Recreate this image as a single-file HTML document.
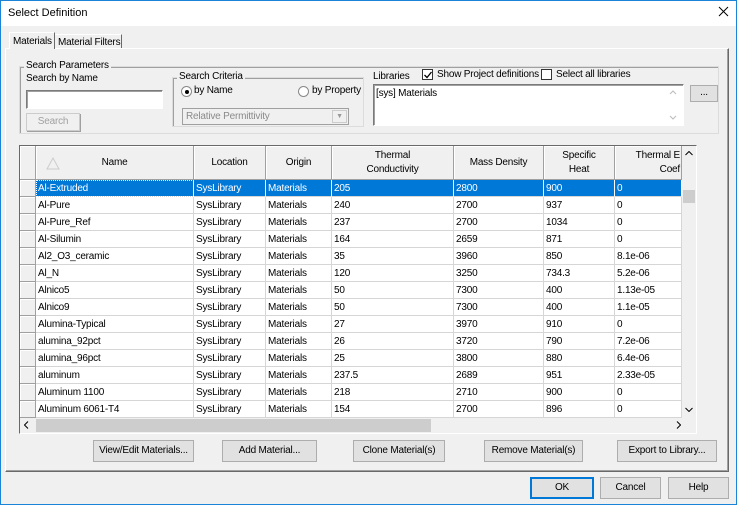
<!DOCTYPE html>
<html><head><style>
*{box-sizing:border-box;margin:0;padding:0}
body{width:737px;height:505px;overflow:hidden;background:#f0f0f0;font-family:"Liberation Sans",sans-serif;font-size:10px;letter-spacing:-0.2px;color:#000;position:relative}
.a{position:absolute;white-space:nowrap}
.win{left:0;top:0;width:737px;height:505px;border:1px solid #1c84d8}
.title{left:1px;top:1px;width:735px;height:25px;background:#fff}
.btn{position:absolute;white-space:nowrap;background:#e1e1e1;border:1px solid #adadad;text-align:center;line-height:20px}
.grp{position:absolute;border:1px solid #dcdcdc;box-shadow:inset 1px 1px 0 #a0a0a0}
.lbl{position:absolute;background:#f0f0f0;padding:0 2px;white-space:nowrap}
.sunk{position:absolute;background:#fff;border:1px solid #7a7a7a;border-right-color:#fff;border-bottom-color:#fff;box-shadow:inset 1px 1px 0 #a0a0a0}
.cell{position:absolute;height:17px;line-height:16px;padding:1px 0 0 2px;white-space:nowrap;overflow:hidden;border-right:1px solid #d6d6d6;border-bottom:1px solid #d6d6d6}
.rh{position:absolute;left:20px;width:16px;height:17px;background:#f0f0f0;border-right:1px solid #a0a0a0;border-bottom:1px solid #a0a0a0;box-shadow:inset 1px 1px 0 #fff}
.hd{position:absolute;top:146px;height:34px;background:#f0f0f0;border-right:1px solid #a0a0a0;border-bottom:1px solid #a0a0a0;box-shadow:inset 1px 1px 0 #fff;text-align:center;display:flex;align-items:center;justify-content:center;line-height:14px;white-space:nowrap;padding-top:1px}
</style></head><body>
<div class="a win"></div>
<div class="a title"></div>
<div class="a" style="left:8px;top:7px;font-size:11px;letter-spacing:0">Select Definition</div>
<svg class="a" style="left:718px;top:6px" width="11" height="11"><path d="M1 1L10 10M10 1L1 10" stroke="#000" stroke-width="1"/></svg>

<div class="a" style="left:5px;top:48px;width:724px;height:424px;border:1px solid #fff;border-right-color:#696969;border-bottom-color:#696969;box-shadow:inset -1px -1px 0 #a0a0a0"></div>
<div class="a" style="left:9px;top:32px;width:46px;height:17px;background:#f0f0f0;border:1px solid #fff;border-bottom:none;border-right:1px solid #696969;padding:3px 0 0 3px">Materials</div>
<div class="a" style="left:55px;top:34px;width:67px;height:14px;border-top:1px solid #fff;border-right:1px solid #696969;padding:2px 0 0 3px">Material Filters</div>

<div class="grp" style="left:19px;top:66px;width:700px;height:68px"></div>
<div class="lbl" style="left:24px;top:60px">Search Parameters</div>
<div class="a" style="left:26px;top:73px">Search by Name</div>
<div class="sunk" style="left:26px;top:90px;width:137px;height:19px"></div>
<div class="btn" style="left:26px;top:113px;width:54px;height:18px;line-height:16px;color:#a0a0a0;border-color:#ccc;background:#f0f0f0;box-shadow:1px 1px 0 #a0a0a0">Search</div>

<div class="grp" style="left:172px;top:77px;width:192px;height:50px"></div>
<div class="lbl" style="left:177px;top:71px">Search Criteria</div>
<div class="a" style="left:181px;top:86px;width:11px;height:11px;border-radius:50%;background:#fff;border:1px solid #888"></div>
<div class="a" style="left:185px;top:90px;width:4px;height:4px;border-radius:50%;background:#000"></div>
<div class="a" style="left:194px;top:85px">by Name</div>
<div class="a" style="left:298px;top:86px;width:11px;height:11px;border-radius:50%;background:#fff;border:1px solid #888"></div>
<div class="a" style="left:312px;top:85px">by Property</div>
<div class="a" style="left:182px;top:108px;width:167px;height:17px;background:#f0f0f0;border:1px solid #a0a0a0;color:#8a8a8a;padding:2px 0 0 3px">Relative Permittivity</div>
<div class="a" style="left:332px;top:110px;width:15px;height:13px;border:1px solid #ccc;color:#999;font-size:7px;text-align:center;line-height:12px">▼</div>

<div class="a" style="left:373px;top:71px">Libraries</div>
<div class="a" style="left:422px;top:69px;width:11px;height:11px;border:1px solid #333;background:#fff"></div>
<svg class="a" style="left:424px;top:71px" width="8" height="8"><path d="M0.5 4L3 6.5L7.5 1" stroke="#000" stroke-width="1.3" fill="none"/></svg>
<div class="a" style="left:437px;top:69px">Show Project definitions</div>
<div class="a" style="left:541px;top:69px;width:11px;height:11px;border:1px solid #333;background:#fff"></div>
<div class="a" style="left:556px;top:69px">Select all libraries</div>
<div class="sunk" style="left:373px;top:84px;width:311px;height:42px;padding:3px 0 0 2px">[sys] Materials</div>
<svg class="a" style="left:669px;top:90px" width="8" height="30"><path d="M1 4L4 1L7 4M1 26L4 29L7 26" stroke="#bbb" fill="none"/></svg>
<div class="btn" style="left:690px;top:85px;width:28px;height:17px;line-height:14px">...</div>

<div class="a" style="left:19px;top:145px;width:678px;height:289px;background:#fff;border:1px solid #696969;border-right-color:#fff;border-bottom-color:#fff;box-shadow:inset 1px 1px 0 #a0a0a0"></div>
<div class="hd" style="left:20px;width:16px"></div>
<div class="hd" style="left:36px;width:158px">Name</div>
<svg class="a" style="left:46px;top:156px" width="14" height="14"><path d="M1 13L7 2L13 13Z" stroke="#ccc" fill="none"/></svg>
<div class="hd" style="left:194px;width:72px">Location</div>
<div class="hd" style="left:266px;width:66px">Origin</div>
<div class="hd" style="left:332px;width:122px">Thermal<br>Conductivity</div>
<div class="hd" style="left:454px;width:90px">Mass Density</div>
<div class="hd" style="left:544px;width:71px">Specific<br>Heat</div>
<div class="hd" style="left:615px;width:67px;justify-content:flex-end;text-align:right;padding-right:1px;overflow:hidden">Thermal E<br>Coef</div>
<div class="a" style="left:682px;top:146px;width:14px;height:272px;background:#f0f0f0"></div>
<svg class="a" style="left:685px;top:151px" width="8" height="5"><path d="M0.5 4L4 0.5L7.5 4" stroke="#000" fill="none"/></svg>
<div class="a" style="left:683px;top:190px;width:12px;height:13px;background:#cdcdcd"></div>
<svg class="a" style="left:685px;top:407px" width="8" height="5"><path d="M0.5 1L4 4.5L7.5 1" stroke="#000" fill="none"/></svg>
<div class="a" style="left:20px;top:418px;width:676px;height:15px;background:#f0f0f0"></div>
<div class="a" style="left:36px;top:419px;width:395px;height:13px;background:#cdcdcd"></div>
<svg class="a" style="left:24px;top:421px" width="5" height="8"><path d="M4 0.5L0.5 4L4 7.5" stroke="#000" fill="none"/></svg>
<svg class="a" style="left:676px;top:421px" width="5" height="8"><path d="M1 0.5L4.5 4L1 7.5" stroke="#000" fill="none"/></svg>

<div id="rows"></div>
<script>
var d=[["Al-Extruded","205","2800","900","0"],["Al-Pure","240","2700","937","0"],["Al-Pure_Ref","237","2700","1034","0"],["Al-Silumin","164","2659","871","0"],["Al2_O3_ceramic","35","3960","850","8.1e-06"],["Al_N","120","3250","734.3","5.2e-06"],["Alnico5","50","7300","400","1.13e-05"],["Alnico9","50","7300","400","1.1e-05"],["Alumina-Typical","27","3970","910","0"],["alumina_92pct","26","3720","790","7.2e-06"],["alumina_96pct","25","3800","880","6.4e-06"],["aluminum","237.5","2689","951","2.33e-05"],["Aluminum 1100","218","2710","900","0"],["Aluminum 6061-T4","154","2700","896","0"]];
var cols=[[36,158],[194,72],[266,66],[332,122],[454,90],[544,71],[615,67]];
var h="";
d.forEach(function(r,i){var y=180+i*17;var v=[r[0],"SysLibrary","Materials",r[1],r[2],r[3],r[4]];
h+='<div class="rh" style="top:'+y+'px"></div>';
v.forEach(function(t,j){var st='left:'+cols[j][0]+'px;top:'+y+'px;width:'+cols[j][1]+'px;';
if(i==0){st+='background:#0078d7;color:#fff;border-right-color:#fff;';if(j==0)st+='outline:1px dotted #fff;outline-offset:-1px;';}
h+='<div class="cell" style="'+st+'">'+t+'</div>';});});
document.getElementById("rows").innerHTML=h;
</script>

<div class="btn" style="left:93px;top:440px;width:101px;height:22px">View/Edit Materials...</div>
<div class="btn" style="left:222px;top:440px;width:95px;height:22px">Add Material...</div>
<div class="btn" style="left:353px;top:440px;width:92px;height:22px">Clone Material(s)</div>
<div class="btn" style="left:484px;top:440px;width:99px;height:22px">Remove Material(s)</div>
<div class="btn" style="left:617px;top:440px;width:100px;height:22px">Export to Library...</div>

<div class="btn" style="left:530px;top:477px;width:64px;height:22px;border:2px solid #0078d7;line-height:18px">OK</div>
<div class="btn" style="left:600px;top:477px;width:61px;height:22px">Cancel</div>
<div class="btn" style="left:668px;top:477px;width:61px;height:22px">Help</div>
</body></html>
